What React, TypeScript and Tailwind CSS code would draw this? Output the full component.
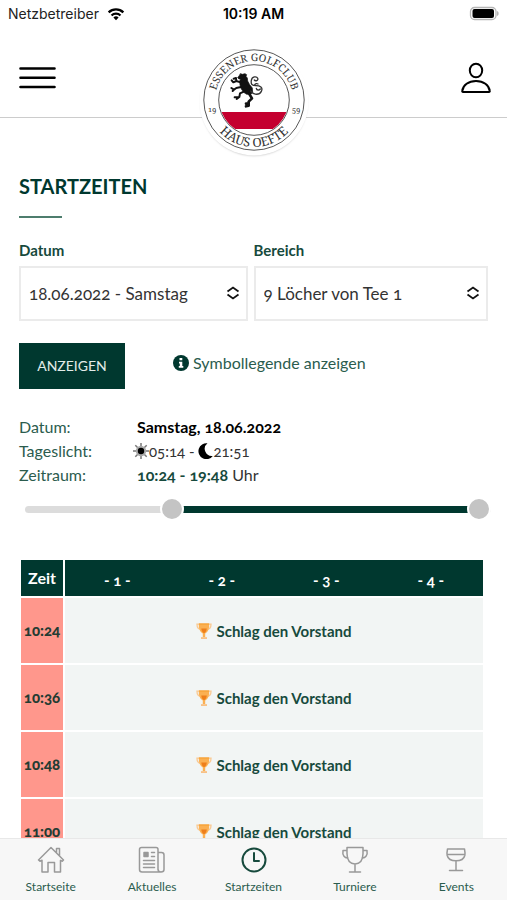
import { useState } from "react";
import type { ReactNode } from "react";

const times = ["10:24", "10:36", "10:48", "11:00"];
const DAY_START = 366;
const DAY_END = 1188;

function formatTime(minutes: number) {
  const h = String(Math.floor(minutes / 60)).padStart(2, "0");
  const m = String(minutes % 60).padStart(2, "0");
  return `${h}:${m}`;
}

function StatusBar() {
  return (
    <div className="grid h-7 grid-cols-3 items-center px-2 font-['Inter',sans-serif] text-sm text-[#222]">
      <div className="flex items-center gap-2">
        <span>Netzbetreiber</span>
        <svg aria-hidden="true" className="h-[14px] w-[18px]" viewBox="0 0 20 16" fill="none" stroke="#000" strokeWidth="2.6">
          <path d="M1.6 6.2a12 12 0 0 1 16.8 0" />
          <path d="M4.9 9.7a7.3 7.3 0 0 1 10.2 0" />
          <path d="M10 15 7 12a4.3 4.3 0 0 1 6 0Z" fill="#000" stroke="none" />
        </svg>
      </div>
      <span className="text-center font-semibold text-black">10:19 AM</span>
      <svg aria-hidden="true" className="h-4 w-8 justify-self-end" viewBox="0 0 32 16">
        <rect x="3.500" y="1.500" width="25.500" height="12" rx="4" fill="#fff" stroke="#b5b5b5" strokeWidth="1.3" />
        <rect x="5.500" y="3" width="21.500" height="9" rx="2" fill="#000" />
        <path d="M30 5c1.400.6 1.600 1.400 1.600 2.500s-.2 1.900-1.600 2.500z" fill="#b5b5b5" />
      </svg>
    </div>
  );
}

function ClubLogo() {
  return (
    <svg role="img" aria-label="Essener Golfclub Haus Oefte 1959" className="h-[116px] w-[116px]" viewBox="-58 -58 116 116">
      <defs>
        <path id="ringTop" d="M-39 0A39 39 0 0 1 39 0" />
        <path id="ringBottom" d="M-47 0A47 47 0 0 0 47 0" />
        <clipPath id="shield">
          <circle r="34.500" />
        </clipPath>
        <filter id="soft" x="-10%" y="-10%" width="120%" height="120%">
          <feGaussianBlur stdDeviation="1" />
        </filter>
      </defs>
      <circle cy="2.500" r="53" fill="#bbb" filter="url(#soft)" />
      <circle cy="1" r="54.500" fill="#fff" />
      <circle r="50.200" fill="none" stroke="#444" strokeWidth="0.900" />
      <circle r="35.300" fill="#fff" stroke="#444" strokeWidth="0.900" />
      <g clipPath="url(#shield)">
        <rect x="-36" y="12" width="72" height="17" fill="#c4002f" />
      </g>
      <g fontFamily="Noto Serif, DejaVu Serif Condensed, Liberation Serif, serif" fill="#333">
        <text fontSize="10.400" textAnchor="middle">
          <textPath href="#ringTop" startOffset="50%">ESSENER GOLFCLUB</textPath>
        </text>
        <text fontSize="12.500" textAnchor="middle">
          <textPath href="#ringBottom" startOffset="50%">HAUS OEFTE</textPath>
        </text>
        <text x="-42" y="12" fontSize="7.500" textAnchor="middle">19</text>
        <text x="42" y="12" fontSize="7.500" textAnchor="middle">59</text>
      </g>
      <g transform="translate(-30 -32) scale(.3333)" fill="none" stroke="#111" strokeLinecap="round" strokeLinejoin="round">
        <path d="M50 17l5 2 8-2 5 3-2 5 4 5 1 9 6 11 8 10 1 14-6 5-12 0-9-6-7-10-4-12-1-12 3-6-5 0-4-4 4-5z" fill="#111" strokeWidth="2" />
        <path d="M50 43 37 39 28 43 23 37M37 39 36 30 29 32M51 57 37 60 30 65 22 60M30 65 26 69" strokeWidth="6" />
        <path d="M61 70 48 76 46 87 32 88M46 87 38 93" strokeWidth="6" />
        <path d="M76 78 84 91 74 101 74 113 66 115M74 106 66 107" strokeWidth="8" />
        <path d="M80 69C90 82 106 82 112 70S108 53 96 53 80 49 82 37 98 24 101 31 94 40 91 36M92 52C93 46 99 46 102 48M97 61C98 68 106 67 109 63" strokeWidth="4" stroke="#333" />
      </g>
    </svg>
  );
}

function Header() {
  return (
    <header className="relative z-10 flex h-[90px] shrink-0 items-start justify-between border-b border-[#ccc] px-4">
      <button type="button" aria-label="Menü" className="mt-9 px-[3px]">
        <svg className="h-7 w-[38px]" viewBox="0 0 38 28" stroke="#000" strokeWidth="2.600" strokeLinecap="round">
          <path d="M1.500 4.500h34M1.500 13.700h34M1.500 23h34" />
        </svg>
      </button>
      <div className="pointer-events-none absolute inset-x-0 top-[14px] flex justify-center">
        <ClubLogo />
      </div>
      <button type="button" aria-label="Profil" className="mt-[34px]">
        <svg className="h-8 w-[30px]" viewBox="0 0 30 32" fill="none" stroke="#000" strokeWidth="2" strokeLinejoin="round">
          <ellipse cx="15" cy="8.500" rx="6.200" ry="6.800" />
          <path d="M2 30c-.6 0-.9-.4-.8-1C2 23 7.500 19 15 19s13 4 13.800 10c.1.600-.2 1-.8 1z" />
        </svg>
      </button>
    </header>
  );
}

function SelectField({ id, label, options, className }: { id: string; label: string; options: string[]; className: string }) {
  return (
    <div className={`min-w-0 ${className}`}>
      <label htmlFor={id} className="block text-[15px] leading-6 font-bold text-[#174a3d]">
        {label}
      </label>
      <div className="relative mt-1">
        <select id={id} className="h-[55px] w-full appearance-none border-2 border-[#ebebeb] bg-white px-2 text-[17px] text-[#333]">
          {options.map((option) => (
            <option key={option}>{option}</option>
          ))}
        </select>
        <svg aria-hidden="true" className="pointer-events-none absolute top-5 right-2 h-[14px] w-[14px]" viewBox="0 0 14 14" fill="none" stroke="#111" strokeWidth="1.800">
          <path d="M1.500 5.500 7 1.500l5.500 4M1.500 8.500l5.500 4 5.500-4" />
        </svg>
      </div>
    </div>
  );
}

const rangeClass =
  "pointer-events-none absolute inset-0 m-0 h-6 w-full appearance-none bg-transparent [&::-webkit-slider-thumb]:pointer-events-auto [&::-webkit-slider-thumb]:h-6 [&::-webkit-slider-thumb]:w-6 [&::-webkit-slider-thumb]:appearance-none [&::-webkit-slider-thumb]:rounded-full [&::-webkit-slider-thumb]:border-2 [&::-webkit-slider-thumb]:border-solid [&::-webkit-slider-thumb]:border-white [&::-webkit-slider-thumb]:bg-[#c4c4c4]";

function TimeRange({ from, to, onFrom, onTo }: { from: number; to: number; onFrom: (v: number) => void; onTo: (v: number) => void }) {
  const left = ((from - DAY_START) / (DAY_END - DAY_START)) * 100;
  const right = 100 - ((to - DAY_START) / (DAY_END - DAY_START)) * 100;
  return (
    <div className="relative -mr-[3px] flex h-6 items-center pl-[6px]">
      <div className="h-[7px] w-full rounded-full bg-[#dcdcdc] pr-3 pl-[6px]">
        <div className="h-full bg-[#00382f]" style={{ marginLeft: `${left}%`, marginRight: `${right}%` }} />
      </div>
      <input type="range" aria-label="Zeitraum von" className={rangeClass} min={DAY_START} max={DAY_END} step={6} value={from} onChange={(e) => onFrom(Math.min(Number(e.target.value), to))} />
      <input type="range" aria-label="Zeitraum bis" className={rangeClass} min={DAY_START} max={DAY_END} step={6} value={to} onChange={(e) => onTo(Math.max(Number(e.target.value), from))} />
    </div>
  );
}

function SunIcon() {
  return (
    <svg aria-hidden="true" className="h-4 w-4" viewBox="0 0 16 16">
      <g stroke="#777" strokeWidth="1.500">
        <path d="M8 0v16M0 8h16M2.300 2.300l11.400 11.400M13.700 2.300 2.300 13.700" />
      </g>
      <circle cx="8" cy="8" r="5.200" fill="#aaa" />
      <circle cx="8" cy="8" r="3.200" fill="#000" />
    </svg>
  );
}

function MoonIcon() {
  return (
    <svg aria-hidden="true" className="h-4 w-[15px]" viewBox="0 0 15 16">
      <path d="M9.500.2A8 8 0 1 0 14.800 13 7.200 7.200 0 0 1 9.500.2Z" />
    </svg>
  );
}

function CupIcon() {
  return (
    <svg aria-hidden="true" className="h-4 w-4" viewBox="0 0 16 16">
      <path d="M3 1.200H1c0 3.200 1.600 5 4 5.200M13 1.200h2c0 3.200-1.600 5-4 5.200" fill="none" stroke="#f9c992" strokeWidth="1.300" />
      <path d="M2.800.5h10.400c.3 5-1 8.500-4 10V14H6.800v-3.500C4 9 2.500 5.500 2.800.5Z" fill="#fbb052" />
      <path d="M5.300 5.500h5.500c-.3 2.500-1.200 4-2.800 4.700C6.500 9.500 5.500 8 5.300 5.500Z" fill="#ee7f1b" />
      <path d="M5 14.300h6v1.500H5z" fill="#f9b56b" />
      <path d="M3 1h10" stroke="#f59d2c" />
    </svg>
  );
}

function TeeTimes() {
  return (
    <table className="mt-[39px] ml-[2px] w-[calc(100%-7px)] table-fixed border-separate border-spacing-0 text-center">
      <colgroup>
        <col className="w-11" />
        <col />
        <col />
        <col />
        <col />
      </colgroup>
      <thead>
        <tr className="h-[38px] font-bold text-white">
          <th scope="col" className="border-r-2 border-b-2 border-white bg-[#00382f] p-0 text-base">Zeit</th>
          {[1, 2, 3, 4].map((n) => (
            <th key={n} scope="col" className="border-b-2 border-white bg-[#00382f] p-0 pt-1 text-[15px]">
              - {n} -
            </th>
          ))}
        </tr>
      </thead>
      <tbody>
        {times.map((time) => (
          <tr key={time} className="h-[67px]">
            <th scope="row" className="border-r-2 border-b-2 border-white bg-[#ff978c] p-0 text-[15px] font-black text-[#243c33]">{time}</th>
            <td colSpan={4} className="border-b-2 border-white bg-[#f2f5f4] p-0">
              <div className="flex items-center justify-center gap-1 text-[15px] leading-5 font-bold text-[#174a3d]">
                <CupIcon />
                Schlag den Vorstand
              </div>
            </td>
          </tr>
        ))}
      </tbody>
    </table>
  );
}

function NavItem({ label, active = false, children }: { label: string; active?: boolean; children: ReactNode }) {
  return (
    <a href="#" aria-current={active ? "page" : undefined} className="flex flex-1 flex-col items-center gap-[3px] pt-[7px] text-xs leading-5 text-[#2b5c4e]">
      <svg aria-hidden="true" className="h-7 w-7" viewBox="0 0 28 28" fill="none" stroke={active ? "#174a3d" : "#999"} strokeWidth={active ? 2 : 1.5} strokeLinejoin="round" strokeLinecap="round">
        {children}
      </svg>
      {label}
    </a>
  );
}

function BottomNav() {
  return (
    <nav className="flex h-[62px] shrink-0 border-t border-[#e8e8e8] bg-[#f7f7f7]">
      <NavItem label="Startseite">
        <path d="M1.500 14 14 1.500 26.500 14l-1.200 1.200-1.800-.9V26h-6v-9.500h-6.500V26h-6V14.300l-2 .9zM19.500 6.500V2.500H22.500V9.500" />
      </NavItem>
      <NavItem label="Aktuelles">
        <path d="M20 24V3.500q0-2-2-2H3.500q-2 0-2 2v20q0 2.500 2.500 2.500h19q3 0 3-2.500V9q0-2.500-2.500-2.500H20M20 23q0 3 3 3" />
        <path d="M6 6.500h4v4H6z" fill="#999" />
        <path d="M13.500 6.500h3M13.500 10.500h3M5.500 14.500h11M5.500 18h11M5.500 21.500h11" />
      </NavItem>
      <NavItem label="Startzeiten" active>
        <circle cx="14" cy="14" r="11.500" />
        <path d="M14 7v8h5" />
      </NavItem>
      <NavItem label="Turniere">
        <path d="M6 1.500h16v6c0 6-2 10-8 10.500C8 17.500 6 13.500 6 7.500zM6 4.500H2c-1 5 2 8 5 7.500M22 4.500h4c1 5-2 8-5 7.500M14 18v7.500M8.500 26h11" />
      </NavItem>
      <NavItem label="Events">
        <path d="M5.500 3h17q.8 4 .3 6.500c-.8 3.500-4 5.300-8.800 5.300S6 13 5.200 9.500Q4.700 7 5.500 3zM5 8.500h18M14 15v9M7.500 24.500h13" />
      </NavItem>
    </nav>
  );
}

export default function App() {
  const [from, setFrom] = useState(624);
  const [to, setTo] = useState(1188);

  return (
    <div className="flex h-screen flex-col bg-white font-['Lato',sans-serif] oldstyle-nums">
      <StatusBar />
      <Header />
      <main className="min-h-0 flex-1 overflow-y-auto px-[19px] pt-[54px] [scrollbar-width:none]">
        <h1 className="text-xl leading-7 font-bold text-[#00382f]">STARTZEITEN</h1>
        <div className="mt-4 h-[2px] w-[43px] bg-[#4d7d6d]" />

        <form onSubmit={(e) => e.preventDefault()}>
          <div className="mt-5 flex gap-[6px]">
            <SelectField id="datum" label="Datum" options={["18.06.2022 - Samstag"]} className="flex-[229]" />
            <SelectField id="bereich" label="Bereich" options={["9 Löcher von Tee 1"]} className="flex-[235]" />
          </div>
          <div className="mt-[22px] flex items-start">
            <button type="submit" className="h-[46px] w-[106px] bg-[#00382f] text-sm text-[#e3ece9]">ANZEIGEN</button>
            <a href="#" className="mt-2 ml-12 flex items-center gap-1 text-base leading-6 text-[#2b5c4e]">
              <svg aria-hidden="true" className="h-4 w-4" viewBox="0 0 16 16">
                <circle cx="8" cy="8" r="8" fill="#00382f" />
                <path d="M6.500 3h2.800v2.300H6.500zM6 6.700h3.300v4.300h1v1.700H5.800V11h1V8.400H6z" fill="#fff" />
              </svg>
              Symbollegende anzeigen
            </a>
          </div>
        </form>

        <dl className="mt-[26px] grid grid-cols-[114px_1fr] text-base leading-[24px] text-[#2b5c4e]">
          <dt>Datum:</dt>
          <dd className="pl-1 font-bold text-black">Samstag, 18.06.2022</dd>
          <dt>Tageslicht:</dt>
          <dd className="flex items-center text-[15px] text-[#333]">
            <SunIcon />
            05:14 -&nbsp;
            <MoonIcon />
            21:51
          </dd>
          <dt>Zeitraum:</dt>
          <dd className="pl-1 text-[#333]">
            <span className="font-bold text-[#174a3d]">
              {formatTime(from)} - {formatTime(to)}
            </span>{" "}
            Uhr
          </dd>
        </dl>

        <div className="mt-[10px]">
          <TimeRange from={from} to={to} onFrom={setFrom} onTo={setTo} />
        </div>

        <TeeTimes />
      </main>
      <BottomNav />
    </div>
  );
}
